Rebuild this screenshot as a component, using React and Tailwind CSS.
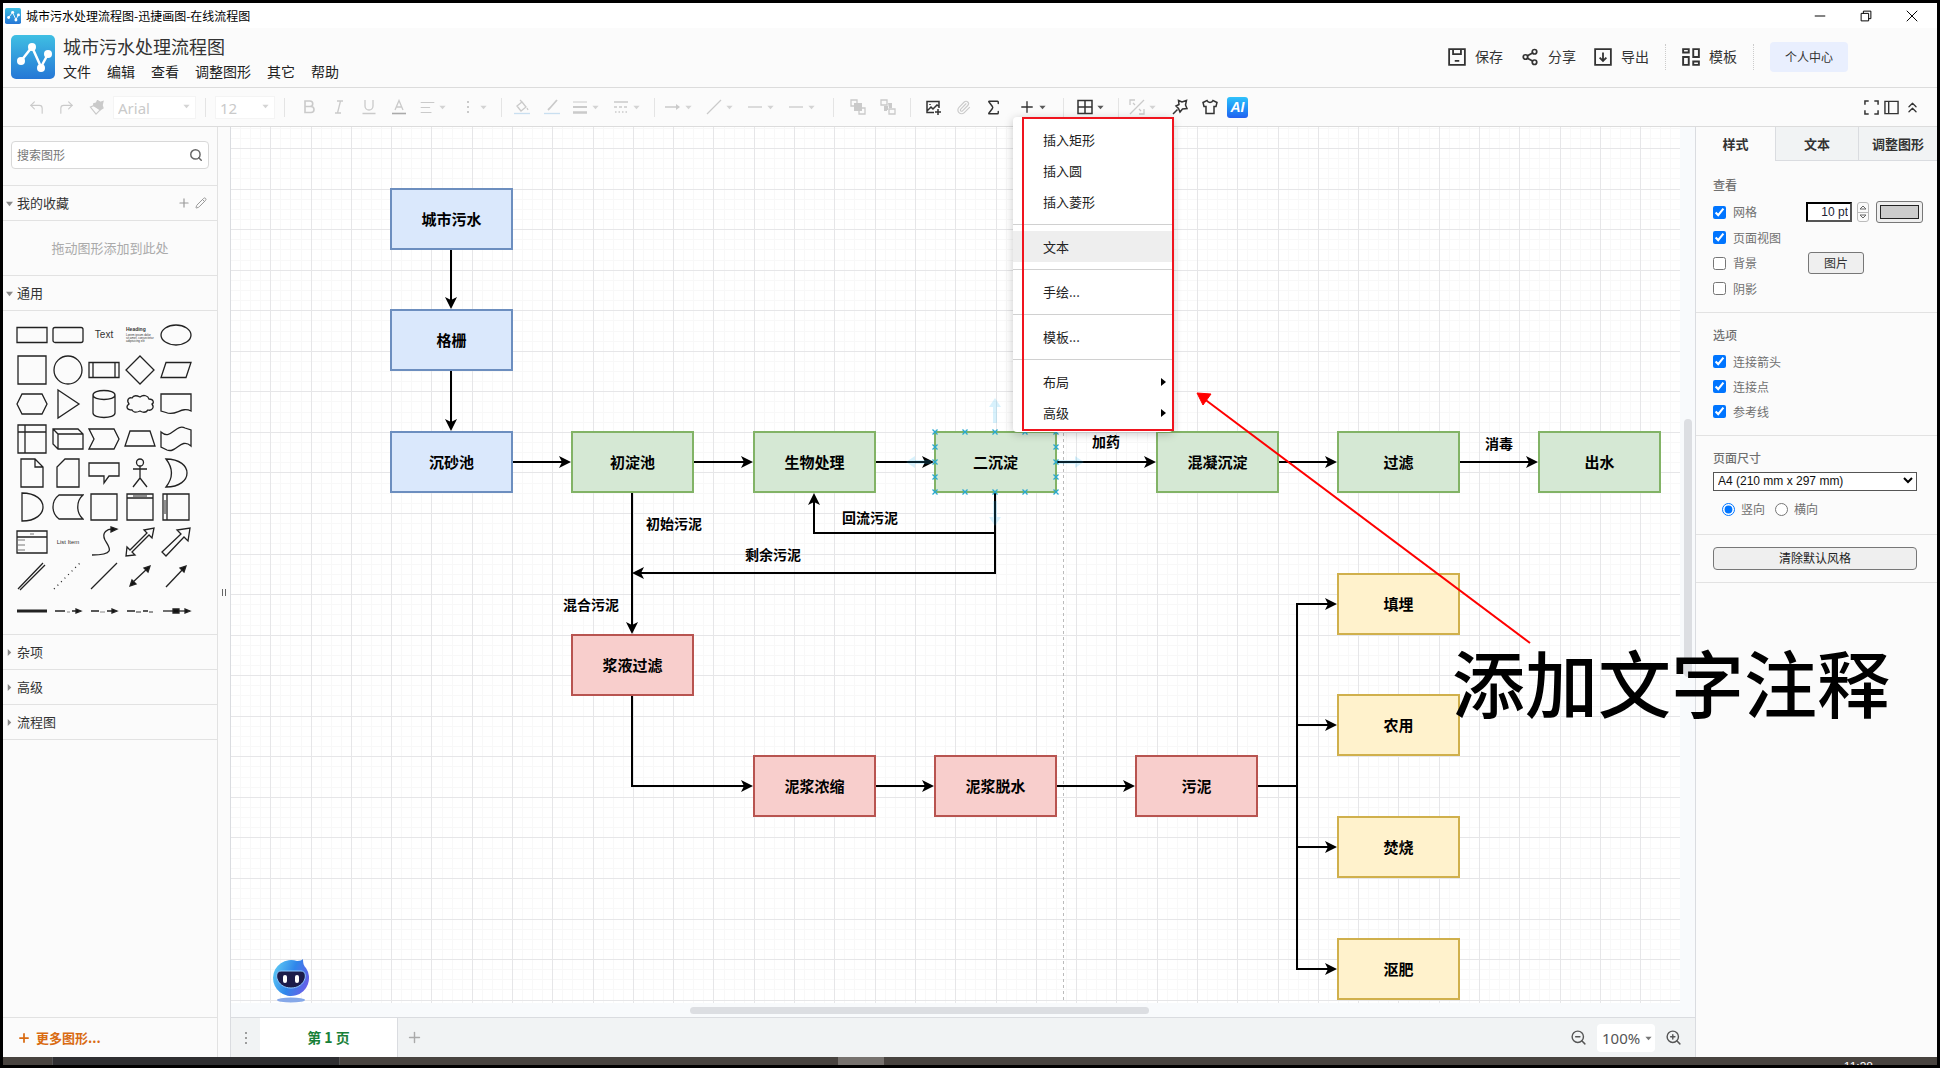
import React from 'react';
import {
  AlignLeft, ChevronsUp, CornerUpLeft, CornerUpRight, Paperclip, Pencil, Plus, Search,
  Share2, Sigma, ZoomIn, ZoomOut,
} from 'lucide-react';

const colors = {
  blue: 'border-[#6c8ebf] bg-[#dae8fc]',
  green: 'border-[#82b366] bg-[#d5e8d4]',
  red: 'border-[#b85450] bg-[#f8cecc]',
  yellow: 'border-[#d0b04c] bg-[#fff2cc]',
};

const nodes = [
  { x: 159, y: 61, color: 'blue', text: '城市污水' },
  { x: 159, y: 182, color: 'blue', text: '格栅' },
  { x: 159, y: 304, color: 'blue', text: '沉砂池' },
  { x: 340, y: 304, color: 'green', text: '初淀池' },
  { x: 522, y: 304, color: 'green', text: '生物处理' },
  { x: 703, y: 304, color: 'green', text: '二沉淀' },
  { x: 925, y: 304, color: 'green', text: '混凝沉淀' },
  { x: 1106, y: 304, color: 'green', text: '过滤' },
  { x: 1307, y: 304, color: 'green', text: '出水' },
  { x: 340, y: 507, color: 'red', text: '浆液过滤' },
  { x: 522, y: 628, color: 'red', text: '泥浆浓缩' },
  { x: 703, y: 628, color: 'red', text: '泥浆脱水' },
  { x: 904, y: 628, color: 'red', text: '污泥' },
  { x: 1106, y: 446, color: 'yellow', text: '填埋' },
  { x: 1106, y: 567, color: 'yellow', text: '农用' },
  { x: 1106, y: 689, color: 'yellow', text: '焚烧' },
  { x: 1106, y: 811, color: 'yellow', text: '沤肥' },
];

const edgeLabels = [
  { x: 415, y: 386, text: '初始污泥' },
  { x: 611, y: 380, text: '回流污泥' },
  { x: 514, y: 417, text: '剩余污泥' },
  { x: 332, y: 467, text: '混合污泥' },
  { x: 861, y: 304, text: '加药' },
  { x: 1254, y: 306, text: '消毒' },
];

const edges = [
  'M220 123V180', 'M220 244V302', 'M281 335H338', 'M462 335H520', 'M644 335H701', 'M825 335H923',
  'M1047 335H1104', 'M1228 335H1305', 'M401 366V505', 'M764 366V446H403', 'M764 366V406H583V368',
  'M401 569V659H520', 'M644 659H701', 'M825 659H902',
  'M1026 659H1066V477H1104', 'M1066 598H1104', 'M1066 659V720H1104', 'M1066 659V842H1104',
];

const shapes = [
  <path d="M1 8.500h30v15H1z" />,
  <rect x="1" y="8.500" width="30" height="15" rx="2" />,
  <text x="16" y="19" fontSize="10" textAnchor="middle" fill="#333" stroke="none">Text</text>,
  <g stroke="none" fill="#333"><text x="2" y="12" fontSize="5" fontWeight="700">Heading</text><text x="2" y="17" fontSize="3">Lorem ipsum dolor</text><text x="2" y="20" fontSize="3">sit amet, consectetur</text><text x="2" y="23" fontSize="3">adipisicing elit</text></g>,
  <ellipse cx="16" cy="16" rx="15" ry="10" />,
  <path d="M2 2h28v28H2z" />,
  <circle cx="16" cy="16" r="14" />,
  <path d="M1 8.500h30v15H1zM5 8.500v15M27 8.500v15" />,
  <path d="M16 2l14 14-14 14L2 16z" />,
  <path d="M6 8.500h25l-5 15H1z" />,
  <path d="M6 6h20l5 10-5 10H6L1 16z" />,
  <path d="M6 2l21 14L6 30z" />,
  <path d="M5 7v18c0 6 22 6 22 0V7M5 7c0-6 22-6 22 0s-22 6-22 0z" />,
  <path d="M8 10c2-4 6-2 8-1 4-3 8-1 9 2 5 0 5 4 3 5 3 4-1 7-4 6-3 4-6 2-8 1-4 2-7 1-8-1-6 0-6-4-3-6-3-4 0-7 3-6z" />,
  <path d="M1 6h30v17c-10-5-15 6-25 1.500L1 23z" />,
  <path d="M2 2h28v28H2zM2 9h28M9 2v28" />,
  <path d="M1 6h25l5 5v15H6l-5-5zM1 6l5 5h25M6 11v15" />,
  <path d="M1 6h25l5 10-5 10H1l5-10z" />,
  <path d="M6 8h20l5 15H1z" />,
  <path d="M1 9c10 9 15-9 24-4l6 2v16c-10-9-15 8-24 4l-6-3z" />,
  <path d="M5 2h14l8 8v20H5zM19 2v8h8" />,
  <path d="M13 2h14v28H5V10z" />,
  <path d="M1 6h30v13H21l-5 7v-7H1z" />,
  <g><circle cx="16" cy="5.500" r="3.500" /><path d="M16 9v12M9 12h14M16 21l-7 9M16 21l7 9" /></g>,
  <path d="M6 2c28 0 28 28 0 28 7-9 7-19 0-28z" />,
  <path d="M6 2c28 0 28 28 0 28z" />,
  <path d="M7 4h24c-7 6-7 18 0 24H7C-1 22-1 10 7 4z" />,
  <path d="M3 3h26v26H3z" />,
  <g><path d="M3 3h26v26H3zM3 7h26" /><path d="M9 5h14" strokeWidth="1" /></g>,
  <g><path d="M3 3h26v26H3zM7 3v26" /><path d="M5 9v14" strokeWidth="1" /></g>,
  <g><path d="M1 5h30v22H1zM1 11h30" /><path d="M14 8h4M2 14h7M2 19h7M2 24h7" strokeWidth="1" stroke="#777" /></g>,
  <text x="16" y="18" fontSize="6" textAnchor="middle" fill="#333" stroke="none">List Item</text>,
  <g><path d="M4 29c25 0 17-8 13-15-4-8 3-11 7-11" /><path d="M29 3l-6-2v5z" fill="#111" /></g>,
  <path d="M2 30l1-9 3 3L23 7l-3-3 10-2-2 10-3-3L8 26l3 3z" />,
  <path d="M2 26L21 8l-4-4 13-2-2 13-4-4L6 30z" />,
  <path d="M2 29L27 3M4 30L29 5" />,
  <path d="M2 29L28 3" strokeDasharray="1 4" />,
  <path d="M3 29L29 3" />,
  <g><path d="M7 24L25 7" /><path d="M26 6l-2 6-4-4zM6 26l2-6 4 4z" fill="#111" /></g>,
  <g><path d="M6 27L25 7" /><path d="M26 6l-2 6-4-4z" fill="#111" /></g>,
  <path d="M1 16h30" strokeWidth="3" />,
  <g><path d="M3 16h10M20 16h6" /><path d="M15 17h3" strokeWidth="1" stroke="#888" /><path d="M29 16l-5-2v4z" fill="#111" /></g>,
  <g><path d="M3 16h8M19 16h6" /><path d="M12 17h5" strokeWidth="1" stroke="#888" /><path d="M29 16l-5-2v4z" fill="#111" /></g>,
  <g><path d="M3 16h8M19 16h5" /><path d="M12 17h5M25 17h4" strokeWidth="1.500" stroke="#777" /></g>,
  <g><path d="M3 16h22" /><path d="M13 14h6v4h-6zM30 16l-5-2v4z" fill="#111" /></g>,
];

const Icon = ({ children, size = 16, className = '' }) => (
  <svg width={size} height={size} viewBox="0 0 16 16" fill="none" stroke="currentColor" strokeWidth="1.300" className={`shrink-0 ${className}`}>{children}</svg>
);

const Caret = () => (
  <svg width="7" height="5" viewBox="0 0 8 5" className="shrink-0 opacity-80" fill="currentColor"><path d="M0.500 0.500h7L4 4.500z" /></svg>
);

const Logo = ({ size }) => (
  <svg width={size} height={size} viewBox="0 0 44 44" className="shrink-0">
    <defs>
      <linearGradient id={`logo${size}`} x1="0" y1="0" x2="0" y2="1">
        <stop offset="0" stopColor="#3fbfe3" />
        <stop offset="1" stopColor="#2577d6" />
      </linearGradient>
    </defs>
    <rect width="44" height="44" rx="5" fill={`url(#logo${size})`} />
    <path d="M10 26L21 12L30 32L37 19" fill="none" stroke="#fff" strokeWidth="2.500" />
    <g fill="#fff"><circle cx="10" cy="26" r="4" /><circle cx="21" cy="12" r="4" /><circle cx="30" cy="33" r="4" /><circle cx="37" cy="19" r="4" /></g>
  </svg>
);

const Tool = ({ label, on, children }) => (
  <button aria-label={label} className={`flex h-[30px] w-[30px] shrink-0 items-center justify-center ${on ? 'text-[#333]' : 'text-[#cacaca]'}`}>{children}</button>
);

const DropTool = ({ label, on, children }) => (
  <button aria-label={label} className={`flex h-[30px] w-[41px] shrink-0 items-center gap-[3px] pl-1 ${on ? 'text-[#333]' : 'text-[#cacaca]'}`}>
    <span className="flex w-[18px] justify-center">{children}</span>
    <Caret />
  </button>
);

const Sep = ({ className }) => <div className={`h-[19px] w-px shrink-0 bg-[#e4e4e4] ${className}`} />;

const TitleBar = () => (
  <div className="flex h-[25px] shrink-0 items-center bg-white pl-[2px]">
    <Logo size={16} />
    <span className="ml-[5px] text-[12px] leading-4 text-black">城市污水处理流程图-迅捷画图-在线流程图</span>
    <div className="ml-auto flex pr-[2px] text-black">
      <button aria-label="最小化" className="flex h-[22px] w-[46px] items-center justify-center"><Icon size={12}><path d="M1 8h14" /></Icon></button>
      <button aria-label="还原" className="flex h-[22px] w-[46px] items-center justify-center"><Icon size={12}><path d="M1.500 4.500h10v10h-10zM4.500 4.500v-3h10v10h-3" /></Icon></button>
      <button aria-label="关闭" className="flex h-[22px] w-[46px] items-center justify-center"><Icon size={12}><path d="M1 1l14 14M15 1L1 15" /></Icon></button>
    </div>
  </div>
);

const Header = () => (
  <header className="flex h-[60px] shrink-0 items-center border-b border-[#dcdcdc] pb-[2px] pl-2">
    <Logo size={44} />
    <div className="ml-2 pt-[2px]">
      <div className="text-[18px] leading-[26px] text-[#333]">城市污水处理流程图</div>
      <nav className="flex gap-4 text-[14px] leading-6 text-[#222]">
        {['文件', '编辑', '查看', '调整图形', '其它', '帮助'].map((m) => <button key={m}>{m}</button>)}
      </nav>
    </div>
    <div className="ml-auto mr-[89px] flex items-center text-[14px] text-[#333]">
      <button className="flex items-center gap-[9px]">
        <Icon size={18}><path d="M1 1h14v14H1zM4.500 1v4.500h7V1M6 11.500h4" strokeWidth="1.600" /></Icon>保存
      </button>
      <button className="ml-[18px] flex items-center gap-[9px]"><Share2 size={18} strokeWidth={2.300} />分享</button>
      <button className="ml-[18px] flex items-center gap-[9px]">
        <Icon size={18}><path d="M1 1h14v14H1zM8 4v7M5 8.500l3 3 3-3" strokeWidth="1.600" /></Icon>导出
      </button>
      <div className="mx-4 h-[26px] border-l border-dotted border-[#ccc]" />
      <button className="flex items-center gap-[9px]">
        <Icon size={18}><path d="M1 1h5v3H1zM1 8h5v7H1zM10 1h5v7h-5zM10 12h5v3h-5z" strokeWidth="1.700" /></Icon>模板
      </button>
      <div className="mx-4 h-[26px] border-l border-dotted border-[#ccc]" />
      <button className="h-[30px] w-[78px] rounded bg-[#e9effe] text-[12px]">个人中心</button>
    </div>
  </header>
);

const menuGroups = [['插入矩形', '插入圆', '插入菱形'], ['文本'], ['手绘...'], ['模板...'], ['布局', '高级']];

const InsertMenu = () => (
  <div className="absolute -left-px top-[29px] z-20 w-[160px] rounded bg-white pb-1 pt-[7px] text-[13px] text-[#222] shadow-[0_2px_10px_rgba(0,0,0,0.22)]">
    {menuGroups.map((group, i) => (
      <div key={i}>
        {i > 0 && <div className="mb-[6px] mt-[7px] h-px bg-[#d0d0d0]" />}
        {group.map((item) => (
          <button key={item} className={`flex h-[31px] w-full items-center justify-between pl-[30px] pr-[7px] ${item === '文本' ? 'bg-[#eee]' : ''}`}>
            {item}
            {i === 4 && <svg width="5" height="8" viewBox="0 0 5 8"><path d="M0 0l5 4-5 4z" /></svg>}
          </button>
        ))}
      </div>
    ))}
  </div>
);

const Toolbar = () => (
  <div className="flex h-[39px] shrink-0 items-center border-b border-[#dcdcdc] pl-[18px]">
    <Tool label="撤销"><CornerUpLeft size={17} strokeWidth={1.600} /></Tool>
    <Tool label="重做"><CornerUpRight size={17} strokeWidth={1.600} /></Tool>
    <Tool label="格式刷"><Icon size={15}><path d="M1.500 7.500L6 5.500l6 5-4.500 4.500z" /><path d="M5 4l3-1 1-2.500 3 2 3-1-1 4 1 3-3 2L5 6z" fill="currentColor" /></Icon></Tool>
    <div className="relative ml-[2px] text-[#cacaca]">
      <select aria-label="字体" className="h-[23px] w-[83px] appearance-none border border-[#f4f4f4] bg-white pl-1 font-['Noto_Sans'] text-[15px] leading-5"><option>Arial</option></select>
      <div className="pointer-events-none absolute right-[6px] top-[9px]"><Caret /></div>
    </div>
    <Sep className="mx-[9px]" />
    <div className="relative text-[#cacaca]">
      <select aria-label="字号" className="h-[23px] w-[60px] appearance-none border border-[#f4f4f4] bg-white pl-1 font-['Noto_Sans'] text-[15px] leading-5"><option>12</option></select>
      <div className="pointer-events-none absolute right-[6px] top-[9px]"><Caret /></div>
    </div>
    <Sep className="mx-[9px]" />
    <Tool label="粗体"><Icon><path d="M4 2h5a2.500 2.500 0 010 5.500H4zM4 7.500h6a3 3 0 010 6H4zM4 2v11.500" strokeWidth="1.600" /></Icon></Tool>
    <Tool label="斜体"><Icon><path d="M6 2h6M4 14h6M9.500 2l-3 12" /></Icon></Tool>
    <Tool label="下划线"><Icon><path d="M4 1v6a4 4 0 008 0V1M1.500 14.500h13" /></Icon></Tool>
    <Tool label="字体颜色"><Icon><path d="M4 11l4-9.500L12 11M5.500 8h5" /><path d="M1 14.500h14" stroke="#aaa" strokeWidth="1.600" /></Icon></Tool>
    <DropTool label="对齐"><AlignLeft size={17} strokeWidth={1.600} /></DropTool>
    <DropTool label="更多"><Icon><path d="M8 2v2M8 7v2M8 12v2" strokeWidth="2" /></Icon></DropTool>
    <Sep className="mx-[5px]" />
    <Tool label="填充颜色"><Icon><path d="M3 7l5-4 4 5-5 4zM6 1l3 3M13 9l1 2" /><path d="M0 14.500h16" stroke="#c9dff0" /></Icon></Tool>
    <Tool label="线条颜色"><Icon><path d="M13 1L6 9l-2 2" strokeWidth="1.800" /><path d="M0 14.500h16" stroke="#c9dff0" /></Icon></Tool>
    <DropTool label="线宽"><Icon><path d="M1 3h14" strokeWidth="1" /><path d="M1 8h14" strokeWidth="2" /><path d="M1 13.500h14" strokeWidth="2.500" /></Icon></DropTool>
    <DropTool label="线型"><Icon><path d="M1 3h14" strokeWidth="1.500" /><path d="M1 8h14" strokeDasharray="3 2" /><path d="M2 13h12" strokeDasharray="1.500 2" /></Icon></DropTool>
    <Sep className="mx-[5px]" />
    <DropTool label="箭头"><Icon><path d="M0 8h12" strokeWidth="1.500" /><path d="M15 8l-4-3v6z" fill="currentColor" stroke="none" /></Icon></DropTool>
    <DropTool label="连线"><Icon><path d="M1 15L15 1" /></Icon></DropTool>
    <DropTool label="起点"><Icon><path d="M1 8h14" /></Icon></DropTool>
    <DropTool label="终点"><Icon><path d="M1 8h14" /></Icon></DropTool>
    <Sep className="mx-[9px]" />
    <Tool label="置于顶层"><Icon><path d="M4 7H1V1h6v3M12 9h3v6H9v-3" /><path d="M4 4h8v8H4z" fill="currentColor" stroke="none" /></Icon></Tool>
    <Tool label="置于底层"><Icon><path d="M1 1h6v5H1zM9 10h6v5H9z" /><path d="M8 4h4v5H9zM4 7h4v4H7v1H4z" fill="currentColor" stroke="none" /></Icon></Tool>
    <Sep className="mx-[7px]" />
    <Tool label="图片" on><Icon><path d="M9 13.500H2v-11h12V9M2 12l4-4 2 2 4-4 2 1.500M13 10v6M10 13h6M5 5v1" strokeWidth="1.500" /></Icon></Tool>
    <Tool label="附件"><Paperclip size={15} strokeWidth={1.800} /></Tool>
    <Tool label="公式" on><Sigma size={19} strokeWidth={1.800} /></Tool>
    <div className="relative ml-[6px] flex h-[38px] items-center">
      <DropTool label="插入" on><Plus size={18} strokeWidth={1.800} /></DropTool>
      <InsertMenu />
    </div>
    <Sep className="mx-2" />
    <DropTool label="表格" on><Icon><path d="M1 1.500h14v13H1zM8 1.500v13M1 8h14" strokeWidth="1.500" /></Icon></DropTool>
    <Sep className="mx-[5px]" />
    <DropTool label="替换"><Icon><path d="M15 1L1 15M1 6V1h5M10 15h5v-5M4 4l2 2M10 10l2 2" /></Icon></DropTool>
    <Tool label="固定" on><Icon><path d="M6.500 1.500l3.500 1.500 4.500-1.500-1 4.500 1.500 3.500-4.500.5-2.500 3-1.500-3.500L4 7l3-1.500zM5.500 10.500L1 15" strokeWidth="1.500" /></Icon></Tool>
    <Tool label="皮肤" on><Icon><path d="M5 1.500c1 2.500 5 2.500 6 0l4 2-1 4h-2v7H4v-7H2l-1-4z" strokeWidth="1.500" /></Icon></Tool>
    <button className="ml-[2px] h-[21px] w-[21px] shrink-0 rounded-[3px] bg-gradient-to-b from-[#30c2fb] to-[#2460f0] font-['Liberation_Sans'] text-[14px] font-bold italic leading-[21px] text-white">AI</button>
    <div className="ml-auto mr-4 flex items-center gap-[5px] text-[#333]">
      <button aria-label="全屏"><Icon size={15}><path d="M1 5V1h4M11 1h4v4M15 11v4h-4M5 15H1v-4" strokeWidth="1.600" /></Icon></button>
      <button aria-label="格式面板"><Icon size={15}><path d="M1 1.500h14v13H1zM5 1.500v13" strokeWidth="1.500" /></Icon></button>
      <button aria-label="收起"><ChevronsUp size={17} strokeWidth={1.800} /></button>
    </div>
  </div>
);

const SectionHeader = ({ title, open, children }) => (
  <div className="flex h-[35px] items-center border-b border-[#e2e2e2] pl-[3px] pr-[10px] text-[13px] text-[#333]">
    <svg width="7" height="7" viewBox="0 0 8 8" fill="#888" className="mr-1"><path d={open ? 'M0 2h8L4 7z' : 'M2 0l4 4-4 4z'} /></svg>
    {title}
    {children}
  </div>
);

const Sidebar = () => (
  <aside className="flex w-[215px] shrink-0 flex-col border-r border-[#e2e2e2]">
    <div className="h-[59px] border-b border-[#e2e2e2] px-2 pt-[14px]">
      <div className="flex h-7 items-center rounded-sm border border-[#d8d8d8] bg-white px-[5px]">
        <input aria-label="搜索图形" placeholder="搜索图形" className="min-w-0 flex-1 text-[12px] outline-none placeholder:text-[#777]" />
        <Search size={14} strokeWidth={2.500} className="text-[#666]" />
      </div>
    </div>
    <SectionHeader title="我的收藏" open>
      <div className="ml-auto flex items-center gap-1 text-[#999]">
        <button aria-label="添加"><Plus size={14} /></button>
        <button aria-label="编辑"><Pencil size={12} /></button>
      </div>
    </SectionHeader>
    <div className="flex h-[55px] items-center justify-center border-b border-[#e2e2e2] text-[13px] text-[#aaa]">拖动图形添加到此处</div>
    <SectionHeader title="通用" open />
    <div className="border-b border-[#e2e2e2] pb-[6px] pl-[11px] pt-[7px]">
      <div className="grid h-[310px] w-[180px] grid-cols-5 grid-rows-9">
        {shapes.map((shape, i) => (
          <div key={i} className="flex items-center justify-center">
            <svg width="32" height="32" viewBox="0 0 32 32" fill="none" stroke="#222" strokeWidth="1.300" className="font-['Liberation_Sans']">{shape}</svg>
          </div>
        ))}
      </div>
    </div>
    <SectionHeader title="杂项" />
    <SectionHeader title="高级" />
    <SectionHeader title="流程图" />
    <button className="mt-auto flex h-10 items-center gap-[5px] border-t border-[#e2e2e2] pl-[14px] text-[13px] font-bold text-[#d96b12]">
      <Plus size={14} strokeWidth={3} />更多图形...
    </button>
  </aside>
);

const GridLines = () => (
  <g shapeRendering="crispEdges">
    {Array.from({ length: 240 }, (_, i) => i).filter((i) => i % 4).map((i) => (
      <g key={i} stroke="#f8f8f8">
        <path d={`M${Math.round(-1 + i * 10.0725) + 0.5} 0V2000`} />
        <path d={`M0 ${Math.round(-19.5 + i * 10.1375) + 0.5}H3000`} />
      </g>
    ))}
    {Array.from({ length: 60 }, (_, i) => (
      <g key={i} stroke="#e6e6e8">
        <path d={`M${Math.round(-1 + i * 40.29) + 0.5} 0V2000`} />
        <path d={`M0 ${Math.round(-19.5 + i * 40.55) + 0.5}H3000`} />
      </g>
    ))}
  </g>
);

// connection points round the hovered node
const anchors = [
  [704, 305], [734, 305], [764, 305], [794, 305], [825, 305], [704, 320], [825, 320], [704, 335], [825, 335],
  [704, 350], [825, 350], [704, 365], [734, 365], [764, 365], [794, 365], [825, 365],
];

const Robot = () => (
  <svg width="40" height="46" viewBox="0 0 40 46" className="absolute bottom-0 left-10">
    <defs>
      <linearGradient id="robot" x1="0" y1="0.300" x2="1" y2="0.700">
        <stop offset="0" stopColor="#5cc8f5" />
        <stop offset="0.500" stopColor="#2f86ea" />
        <stop offset="1" stopColor="#6b5ce8" />
      </linearGradient>
    </defs>
    <ellipse cx="20" cy="43" rx="14" ry="2.500" fill="#86a8e8" />
    <path d="M32 2c0 5 1 7 3 9a18 18 0 11-9-7c3 0 5-1 6-2z" fill="url(#robot)" />
    <path d="M10 14h20c8 0 5 17-10 17S2 14 10 14z" fill="#1c1b4a" stroke="#8fc9ff" strokeWidth="1" />
    <rect x="12" y="18" width="4" height="8" rx="2" fill="#fff" />
    <rect x="24" y="18" width="4" height="8" rx="2" fill="#fff" />
  </svg>
);

const Canvas = () => (
  <div className="relative min-w-0 flex-1 overflow-hidden bg-white">
    <svg className="absolute inset-0 h-full w-full">
      <defs>
        <marker id="arrow" markerUnits="userSpaceOnUse" markerWidth="14" markerHeight="14" refX="10" refY="6" orient="auto">
          <path d="M0 0l12 6-12 6 3-6z" />
        </marker>
      </defs>
      <GridLines />
      <path d="M832.500 0V2000" stroke="#bbb" strokeDasharray="3 3" />
      <g fill="none" stroke="#000" strokeWidth="2">
        {edges.map((d) => <path key={d} d={d} markerEnd="url(#arrow)" />)}
      </g>
      <g fill="#29b6f2" opacity="0.180">
        <path d="M762 296v-16h-4l6-9 6 9h-4v16z" />
        <path d="M762 374v16h-4l6 9 6-9h-4v-16z" />
        <path d="M828 333h16v-4l9 6-9 6v-4h-16z" />
        <path d="M700 333h-16v-4l-9 6 9 6v-4h16z" />
      </g>
    </svg>
    {nodes.map((n) => (
      <div key={n.text} style={{ left: n.x, top: n.y }} className={`absolute flex h-[62px] w-[123px] items-center justify-center border-2 text-[15px] font-bold text-black ${colors[n.color]}`}>{n.text}</div>
    ))}
    {edgeLabels.map((l) => (
      <div key={l.text} style={{ left: l.x, top: l.y }} className="absolute text-[14px] font-bold leading-5 text-black">{l.text}</div>
    ))}
    <svg className="pointer-events-none absolute inset-0 h-full w-full">
      <g stroke="#29a9cf" strokeWidth="1.300">
        {anchors.map(([x, y]) => <path key={`${x}-${y}`} d={`M${x - 2.5} ${y - 2.5}l5 5M${x + 2.5} ${y - 2.5}l-5 5`} />)}
      </g>
    </svg>
    <Robot />
  </div>
);

const PageBar = () => (
  <div className="flex h-10 shrink-0 items-center border-t border-[#dadce0] bg-[#f1f3f4] text-[#555]">
    <button aria-label="页面菜单" className="flex h-full w-[29px] items-center justify-center text-[#888]"><Icon><path d="M8 2v2M8 7v2M8 12v2" strokeWidth="1.600" /></Icon></button>
    <button className="h-full w-[138px] border-r border-[#dadce0] bg-white text-[14px] font-bold text-[#188038]">第 1 页</button>
    <button aria-label="新建页" className="ml-2 text-[#aaa]"><Plus size={17} /></button>
    <div className="ml-auto mr-[13px] flex items-center">
      <button aria-label="缩小"><ZoomOut size={17} /></button>
      <div className="relative mx-[10px]">
        <select aria-label="缩放" className="h-7 w-[58px] appearance-none rounded-sm bg-white pl-[5px] font-['Noto_Sans'] text-[15px] leading-5"><option>100%</option></select>
        <div className="pointer-events-none absolute right-[3px] top-3"><Caret /></div>
      </div>
      <button aria-label="放大"><ZoomIn size={17} /></button>
    </div>
  </div>
);

const Check = ({ label, checked }) => (
  <label className="flex h-[25px] items-center gap-[7px]">
    <input type="checkbox" defaultChecked={checked} className="h-[13px] w-[13px] accent-[#0075ff]" />
    {label}
  </label>
);

const FormatPanel = () => (
  <aside className="flex w-[242px] shrink-0 flex-col border-l border-[#dadce0] text-[12px] text-[#707070]">
    <div className="flex h-[34px] text-[13px] font-bold text-[#333]">
      <button className="w-[79px]">样式</button>
      <button className="w-[83px] border-b border-l border-[#dadce0] bg-[#f1f3f4]">文本</button>
      <button className="flex-1 border-b border-l border-[#dadce0] bg-[#f1f3f4]">调整图形</button>
    </div>
    <div className="border-b border-[#e2e2e2] pb-[11px] pl-[17px] pt-[14px]">
      <div className="mb-1 font-medium leading-5">查看</div>
      <div className="flex h-[26px] items-center">
        <div className="w-[93px]"><Check label="网格" checked /></div>
        <input aria-label="网格大小" defaultValue="10 pt" className="h-[20px] w-[46px] border-2 border-b-[#555] border-l-black border-r-[#555] border-t-black bg-white pr-[2px] text-right font-['Liberation_Sans'] text-[12px] text-[#223]" />
        <div className="ml-[5px] flex h-[20px] w-[12px] flex-col rounded-[3px] border border-[#bbb]">
          <button aria-label="增大" className="flex flex-1 items-center justify-center border-b border-[#bbb]"><svg width="8" height="5" viewBox="0 0 8 5" fill="none" stroke="#666"><path d="M1 4h6L4 1z" /></svg></button>
          <button aria-label="减小" className="flex flex-1 items-center justify-center"><svg width="8" height="5" viewBox="0 0 8 5" fill="none" stroke="#666"><path d="M1 1h6L4 4z" /></svg></button>
        </div>
        <button aria-label="网格颜色" className="ml-[7px] h-[22px] w-[47px] rounded-[3px] border border-[#777] bg-[#efefef] p-[3px]"><span className="block h-full w-full border border-[#222] bg-[#ccc]" /></button>
      </div>
      <Check label="页面视图" checked />
      <div className="flex h-[26px] items-center">
        <div className="w-[95px]"><Check label="背景" /></div>
        <button className="h-[22px] w-[56px] rounded-[3px] border border-[#777] bg-[#efefef] text-[#333]">图片</button>
      </div>
      <Check label="阴影" />
    </div>
    <div className="border-b border-[#e2e2e2] pb-[11px] pl-[17px] pt-3">
      <div className="mb-1 font-medium leading-5">选项</div>
      <Check label="连接箭头" checked />
      <Check label="连接点" checked />
      <Check label="参考线" checked />
    </div>
    <div className="border-b border-[#e2e2e2] px-[17px] pb-3 pt-3">
      <label htmlFor="paper" className="mb-[3px] block font-medium leading-5">页面尺寸</label>
      <div className="relative mr-[3px]">
        <select id="paper" className="h-[19px] w-full appearance-none border border-[#555] bg-white pl-1 font-['Liberation_Sans'] text-[12px] leading-4 text-[#111]"><option>A4 (210 mm x 297 mm)</option></select>
        <svg width="10" height="7" viewBox="0 0 10 7" fill="none" stroke="#000" strokeWidth="2" className="pointer-events-none absolute right-1 top-[6px]"><path d="M1 1l4 4 4-4" /></svg>
      </div>
      <div className="mt-[6px] flex h-[25px] items-center gap-[10px] pl-[9px]">
        <label className="flex items-center gap-[6px]"><input type="radio" name="orient" defaultChecked className="h-[13px] w-[13px] accent-[#0075ff]" />竖向</label>
        <label className="flex items-center gap-[6px]"><input type="radio" name="orient" className="h-[13px] w-[13px]" />横向</label>
      </div>
    </div>
    <div className="border-b border-[#e2e2e2] py-3 pl-[17px] pr-5">
      <button className="h-[23px] w-full rounded-sm border border-[#777] bg-[#efefef] text-[#222]">清除默认风格</button>
    </div>
  </aside>
);

const Annotation = () => (
  <div className="pointer-events-none absolute inset-0 z-30">
    <div className="absolute left-[1019px] top-[114px] h-[314px] w-[152px] border-2 border-[#f0141e]" />
    <svg className="absolute inset-0 h-full w-full" fill="#f00" stroke="#f00">
      <path d="M1527 640L1200 395" strokeWidth="2" />
      <path d="M1194 390l14 1-8 11z" />
    </svg>
    <div className="absolute left-[1449px] top-[641px] whitespace-nowrap text-[73px] font-medium leading-[73px] text-black">添加文字注释</div>
  </div>
);

const Taskbar = () => (
  <div className="flex h-2 shrink-0 overflow-hidden bg-[#48433f]">
    <div className="ml-[49px] w-[288px] border-x border-[#555] bg-[#2f2f31]" />
    <div className="ml-[498px] w-[46px] bg-[#77726e]" />
    <span className="ml-auto mr-[64px] pt-[2px] font-['Liberation_Sans'] text-[12px] leading-4 text-white">11:38</span>
  </div>
);

const App = () => (
  <div className="relative flex h-screen flex-col overflow-hidden border-[3px] border-black bg-[#fbfbfb] font-['Noto_Sans_CJK_SC',sans-serif]">
    <TitleBar />
    <Header />
    <Toolbar />
    <div className="flex min-h-0 flex-1">
      <Sidebar />
      <div className="flex w-3 shrink-0 items-center justify-center text-[#666]">
        <svg width="4" height="7" viewBox="0 0 4 7" stroke="currentColor"><path d="M0.500 0v7M3.500 0v7" /></svg>
      </div>
      <main className="flex min-w-0 flex-1 flex-col border-l border-[#dadce0]">
        <div className="flex min-h-0 flex-1">
          <Canvas />
          <div className="flex w-[15px] shrink-0 justify-center bg-[#f8fafc]"><div className="mt-[292px] h-[258px] w-2 rounded bg-[#dcdee2]" /></div>
        </div>
        <div className="flex h-[14px] shrink-0 items-center bg-[#f8fafc]"><div className="ml-[459px] h-[7px] w-[459px] rounded bg-[#dcdee2]" /></div>
        <PageBar />
      </main>
      <FormatPanel />
    </div>
    <Taskbar />
    <Annotation />
  </div>
);

export default App;
